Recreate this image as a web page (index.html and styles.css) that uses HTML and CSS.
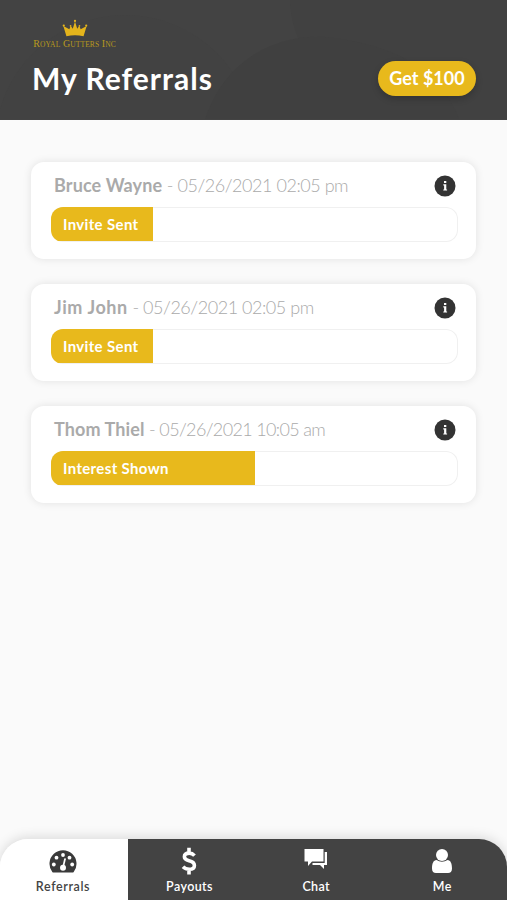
FILE: index.html
```html
<!DOCTYPE html>
<html lang="en">
<head>
<meta charset="utf-8">
<title>My Referrals</title>
<link rel="stylesheet" href="styles.css">
</head>
<body>
<div class="app">
  <header class="header">
    <svg class="waves" viewBox="0 0 507 119" aria-hidden="true">
      <circle cx="125" cy="145" r="130" fill="#424242"/>
      <path d="M290 0H507V119H420C340 104 292 60 290 0Z" fill="#414141"/>
      <path d="M205 119C225 60 275 34 325 37C390 43 440 68 459 119Z" fill="#404040"/>
    </svg>
    <div class="logo">
      <svg class="crown" viewBox="0 0 30 21" aria-hidden="true">
        <path d="M5 20L1.4 8.3L8.4 12L10 8L12.4 11.5L15 3L17.6 11.5L20 8L21.6 12L28.6 8.3L25 20Q15 17.8 5 20Z" fill="#e4b41c"/>
        <g fill="#e4b41c"><circle cx="15" cy="2.3" r="1.3"/><circle cx="1.9" cy="7.7" r="1.3"/><circle cx="28.1" cy="7.7" r="1.3"/><circle cx="9.8" cy="8" r="1"/><circle cx="20.2" cy="8" r="1"/></g>
      </svg>
      <div class="brand">R<small>OYAL</small> G<small>UTTERS</small> I<small>NC</small></div>
    </div>
    <div class="title-row">
      <h1>My Referrals</h1>
      <button class="reward">Get $100</button>
    </div>
  </header>
  <main class="list">
    <article class="card">
      <div class="card-head">
        <p><b class="n1">Bruce Wayne</b> <span class="d1">- 05/26/2021 02:05 pm</span></p>
        <svg class="info" viewBox="0 0 22 22"><circle cx="11" cy="11" r="10.5" fill="#333"/><path d="M10 6h2.300v2H10zM9.300 9.300h3v5.200h.8v1.100H9.300v-1.100h.8v-4.100h-.8z" fill="#fff"/></svg>
      </div>
      <div class="track"><div class="fill quarter">Invite Sent</div></div>
    </article>
    <article class="card">
      <div class="card-head">
        <p><b class="n2">Jim John</b> <span class="d1">- 05/26/2021 02:05 pm</span></p>
        <svg class="info" viewBox="0 0 22 22"><circle cx="11" cy="11" r="10.5" fill="#333"/><path d="M10 6h2.300v2H10zM9.300 9.300h3v5.200h.8v1.100H9.300v-1.100h.8v-4.100h-.8z" fill="#fff"/></svg>
      </div>
      <div class="track"><div class="fill quarter">Invite Sent</div></div>
    </article>
    <article class="card">
      <div class="card-head">
        <p><b class="n3">Thom Thiel</b> <span class="d3">- 05/26/2021 10:05 am</span></p>
        <svg class="info" viewBox="0 0 22 22"><circle cx="11" cy="11" r="10.5" fill="#333"/><path d="M10 6h2.300v2H10zM9.300 9.300h3v5.200h.8v1.100H9.300v-1.100h.8v-4.100h-.8z" fill="#fff"/></svg>
      </div>
      <div class="track"><div class="fill half">Interest Shown</div></div>
    </article>
  </main>
  <nav class="tabs">
    <a class="tab active">
      <svg viewBox="0 0 28 28"><path d="M3.300 25A13.500 13.500 0 1 1 24.700 25Q24.200 25.500 23.500 25.500H4.500Q3.800 25.500 3.300 25Z" fill="#3a3a3a"/><g fill="#fff"><circle cx="4.800" cy="17.500" r="1.900"/><circle cx="7.500" cy="10.700" r="1.900"/><circle cx="14" cy="8" r="1.900"/><circle cx="20.500" cy="10.700" r="1.900"/><circle cx="23.200" cy="17.500" r="1.900"/><circle cx="14" cy="20.800" r="3"/></g><path d="M14 20.500L16 12" stroke="#fff" stroke-width="1.700" stroke-linecap="round"/></svg>
      <span>Referrals</span>
    </a>
    <a class="tab payouts">
      <svg viewBox="0 0 28 28"><path d="M18.500 8.600Q16.300 6.100 13.200 6.100Q8.400 6.100 8.400 9.800Q8.400 12.700 13 13.800Q18.400 15 18.400 18.400Q18.400 22.300 13.300 22.300Q9.400 22.300 7 19.800M13 .8V6M13 22V27.500" fill="none" stroke="#fff" stroke-width="3.600"/></svg>
      <span>Payouts</span>
    </a>
    <a class="tab chat">
      <svg viewBox="0 0 28 28"><path d="M2.500 2H21.500V14.500H10L6 19V14.500H2.500Z" fill="#fff"/><path d="M22.700 5H25V18H22V22L18 18H10.500V16H22.700Z" fill="#fff"/></svg>
      <span>Chat</span>
    </a>
    <a class="tab last">
      <svg viewBox="0 0 28 28"><path d="M8.500 13C5.500 13 4 16.500 4 21.500C4 24.500 5.500 26 8 26H20C22.500 26 24 24.500 24 21.500C24 16.500 22.500 13 19.500 13Q17 14.800 14 14.800Q11 14.800 8.500 13Z" fill="#fff"/><circle cx="14" cy="8" r="6" fill="#fff"/></svg>
      <span>Me</span>
    </a>
  </nav>
</div>
</body>
</html>
```
FILE: styles.css
```css
* { box-sizing: border-box; }
body { margin: 0; font-family: Lato, "Liberation Sans", sans-serif; }
.app { height: 900px; display: flex; flex-direction: column; background: #fafafa; overflow: hidden; }
.header { position: relative; height: 119.500px; padding: 19px 31px 0 32px; background: #434343; }
.waves { position: absolute; inset: 0; width: 507px; height: 119px; }
.logo { position: relative; width: 85px; height: 31px; display: flex; flex-direction: column; align-items: center; }
.crown { width: 30px; height: 21px; }
.brand { color: #b8991d; font: 10px/11px "Liberation Serif", serif; letter-spacing: .1px; white-space: nowrap; padding-top: 1px; }
.brand small { font-size: 7.500px; }
.title-row { position: relative; display: flex; justify-content: space-between; align-items: center; height: 56px; }
h1 { margin: 0; color: #fff; font-size: 30px; line-height: 36px; font-weight: 700; letter-spacing: 1px; white-space: nowrap; }
.reward { width: 98px; height: 35px; border: 0; border-radius: 18px; padding: 0; color: #fff; background: #e8b91c; font: 700 18px/35px Lato, sans-serif; box-shadow: 0 3px 7px rgba(0,0,0,.2); }
.list { flex: 1; display: flex; flex-direction: column; gap: 25px; padding: 42.500px 31px 0; }
.card { height: 97px; padding: 10px 18px 0 20px; border-radius: 13px; background: #fff; box-shadow: 0 0 8px rgba(0,0,0,.1); }
.card-head { display: flex; align-items: center; justify-content: space-between; height: 26px; padding: 0 2px 0 3px; }
.card-head p { margin: 0; color: #aaa; font-size: 18px; line-height: 26px; white-space: nowrap; }
.card-head b { font-weight: 700; }
.card-head span { font-weight: 300; }
.n1 { letter-spacing: .12px; }
.n2 { letter-spacing: .58px; }
.n3 { letter-spacing: .1px; }
.d1 { letter-spacing: -.46px; }
.d3 { letter-spacing: -.65px; }
.info { width: 22px; height: 22px; margin-top: 1px; }
.track { height: 35px; margin-top: 9px; border-radius: 12px; box-shadow: inset 0 0 0 1px #f0f0f0; overflow: hidden; }
.fill { height: 34px; padding-left: 12px; background: #e8b91c; color: #fff; font-size: 15px; font-weight: 700; line-height: 34px; letter-spacing: .35px; }
.quarter { width: 25%; }
.half { width: 50%; }
.tabs { height: 61px; display: grid; grid-template-columns: 128px 124px 1fr 1fr; border-radius: 28px 28px 0 0; box-shadow: 0 -2px 12px rgba(0,0,0,.13); }
.tab { display: flex; flex-direction: column; align-items: center; padding: 8px 1px 0 0; background: #434343; color: #fff; font-size: 12.500px; line-height: 16px; font-weight: 600; letter-spacing: .4px; }
.tab svg { width: 28px; height: 28px; margin-bottom: 4px; }
.active { padding-right: 2px; background: #fff; color: #444; border-top-left-radius: 28px; letter-spacing: .6px; }
.chat { padding-right: 0; padding-left: 1px; }
.last { padding-right: 2px; border-top-right-radius: 28px; }
```
